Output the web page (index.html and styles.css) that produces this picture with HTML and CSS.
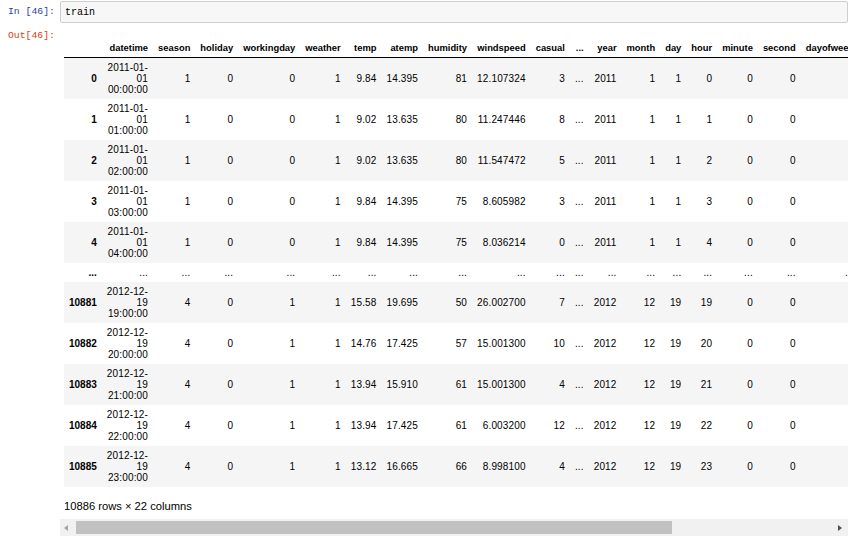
FILE: index.html
```html
<!DOCTYPE html>
<html>
<head>
<meta charset="utf-8">
<link rel="stylesheet" href="styles.css">
</head>
<body>
<div class="cell">
  <div class="prompt prompt-in">In&nbsp;[46]:</div>
  <div class="input-box"><span class="code">train</span></div>

  <div class="prompt prompt-out">Out[46]:</div>
  <div class="output">
    <div class="viewport">
      <table class="df">
        <thead>
          <tr><th></th><th>datetime</th><th>season</th><th>holiday</th><th>workingday</th><th>weather</th><th>temp</th><th>atemp</th><th>humidity</th><th>windspeed</th><th>casual</th><th>...</th><th>year</th><th>month</th><th>day</th><th>hour</th><th>minute</th><th>second</th><th>dayofweek</th></tr>
        </thead>
        <tbody>
          <tr><th>0</th><td>2011-01-<br>01<br>00:00:00</td><td>1</td><td>0</td><td>0</td><td>1</td><td>9.84</td><td>14.395</td><td>81</td><td>12.107324</td><td>3</td><td>...</td><td>2011</td><td>1</td><td>1</td><td>0</td><td>0</td><td>0</td><td>5</td></tr>
          <tr><th>1</th><td>2011-01-<br>01<br>01:00:00</td><td>1</td><td>0</td><td>0</td><td>1</td><td>9.02</td><td>13.635</td><td>80</td><td>11.247446</td><td>8</td><td>...</td><td>2011</td><td>1</td><td>1</td><td>1</td><td>0</td><td>0</td><td>5</td></tr>
          <tr><th>2</th><td>2011-01-<br>01<br>02:00:00</td><td>1</td><td>0</td><td>0</td><td>1</td><td>9.02</td><td>13.635</td><td>80</td><td>11.547472</td><td>5</td><td>...</td><td>2011</td><td>1</td><td>1</td><td>2</td><td>0</td><td>0</td><td>5</td></tr>
          <tr><th>3</th><td>2011-01-<br>01<br>03:00:00</td><td>1</td><td>0</td><td>0</td><td>1</td><td>9.84</td><td>14.395</td><td>75</td><td>8.605982</td><td>3</td><td>...</td><td>2011</td><td>1</td><td>1</td><td>3</td><td>0</td><td>0</td><td>5</td></tr>
          <tr><th>4</th><td>2011-01-<br>01<br>04:00:00</td><td>1</td><td>0</td><td>0</td><td>1</td><td>9.84</td><td>14.395</td><td>75</td><td>8.036214</td><td>0</td><td>...</td><td>2011</td><td>1</td><td>1</td><td>4</td><td>0</td><td>0</td><td>5</td></tr>
          <tr><th>...</th><td>...</td><td>...</td><td>...</td><td>...</td><td>...</td><td>...</td><td>...</td><td>...</td><td>...</td><td>...</td><td>...</td><td>...</td><td>...</td><td>...</td><td>...</td><td>...</td><td>...</td><td>...</td></tr>
          <tr><th>10881</th><td>2012-12-<br>19<br>19:00:00</td><td>4</td><td>0</td><td>1</td><td>1</td><td>15.58</td><td>19.695</td><td>50</td><td>26.002700</td><td>7</td><td>...</td><td>2012</td><td>12</td><td>19</td><td>19</td><td>0</td><td>0</td><td>2</td></tr>
          <tr><th>10882</th><td>2012-12-<br>19<br>20:00:00</td><td>4</td><td>0</td><td>1</td><td>1</td><td>14.76</td><td>17.425</td><td>57</td><td>15.001300</td><td>10</td><td>...</td><td>2012</td><td>12</td><td>19</td><td>20</td><td>0</td><td>0</td><td>2</td></tr>
          <tr><th>10883</th><td>2012-12-<br>19<br>21:00:00</td><td>4</td><td>0</td><td>1</td><td>1</td><td>13.94</td><td>15.910</td><td>61</td><td>15.001300</td><td>4</td><td>...</td><td>2012</td><td>12</td><td>19</td><td>21</td><td>0</td><td>0</td><td>2</td></tr>
          <tr><th>10884</th><td>2012-12-<br>19<br>22:00:00</td><td>4</td><td>0</td><td>1</td><td>1</td><td>13.94</td><td>17.425</td><td>61</td><td>6.003200</td><td>12</td><td>...</td><td>2012</td><td>12</td><td>19</td><td>22</td><td>0</td><td>0</td><td>2</td></tr>
          <tr><th>10885</th><td>2012-12-<br>19<br>23:00:00</td><td>4</td><td>0</td><td>1</td><td>1</td><td>13.12</td><td>16.665</td><td>66</td><td>8.998100</td><td>4</td><td>...</td><td>2012</td><td>12</td><td>19</td><td>23</td><td>0</td><td>0</td><td>2</td></tr>
        </tbody>
      </table>
      <p class="shape">10886 rows × 22 columns</p>
    </div>
    <div class="hscroll">
      <div class="sb-btn"><span class="arrow-left"></span></div>
      <div class="sb-track"><div class="sb-thumb"></div></div>
      <div class="sb-btn"><span class="arrow-right"></span></div>
    </div>
  </div>
</div>
</body>
</html>
```

FILE: styles.css
```css
html, body {
  margin: 0;
  padding: 0;
  background: #ffffff;
}

.cell {
  display: grid;
  grid-template-columns: 60px 788px;
  grid-template-rows: 22px auto;
  row-gap: 5px;
  padding-top: 1px;
  font-family: "Liberation Sans", Arial, sans-serif;
  color: #000;
}

.prompt {
  font-family: "Liberation Mono", "DejaVu Sans Mono", monospace;
  font-size: 9.8px;
  text-align: right;
  padding-right: 5px;
  white-space: nowrap;
}

.prompt-in {
  color: #303f9f;
  line-height: 22px;
}

.prompt-out {
  color: #d84315;
  line-height: 14px;
  padding-top: 1px;
}

.input-box {
  box-sizing: border-box;
  height: 22px;
  border: 1px solid #cfcfcf;
  border-radius: 2px;
  background: #f7f7f7;
  display: flex;
  align-items: center;
  padding-left: 4px;
}

.code {
  font-family: "Liberation Mono", "DejaVu Sans Mono", monospace;
  font-size: 10px;
  color: #000;
}

.output {
  display: flex;
  flex-direction: column;
  min-width: 0;
}

.viewport {
  overflow: hidden;
  padding: 10px 0 0 4px;
}

.df {
  border-collapse: collapse;
  border-spacing: 0;
  font-size: 10px;
  line-height: 11px;
  white-space: nowrap;
  color: #000;
}

.df th, .df td {
  text-align: right;
  vertical-align: middle;
  padding: 4px 5px;
  border: none;
}

.df td {
  letter-spacing: 0.15px;
}

.df th {
  font-weight: bold;
}

.df thead th {
  font-size: 9.4px;
  border-bottom: 1px solid #000;
}

.df tbody tr:nth-child(odd) {
  background: #f5f5f5;
}

.shape {
  margin: 13px 0 6px 0;
  font-size: 11.2px;
  line-height: 13px;
}

.hscroll {
  display: flex;
  height: 17px;
  background: #f1f1f1;
}

.sb-btn {
  width: 16px;
  flex: none;
  display: flex;
  align-items: center;
  justify-content: center;
}

.sb-track {
  flex: 1;
  display: flex;
  align-items: center;
}

.sb-thumb {
  width: 596px;
  height: 13px;
  background: #c1c1c1;
}

.arrow-left {
  width: 0;
  height: 0;
  border-top: 3.5px solid transparent;
  border-bottom: 3.5px solid transparent;
  border-right: 4px solid #a3a3a3;
  margin-right: 4px;
}

.arrow-right {
  width: 0;
  height: 0;
  border-top: 3.5px solid transparent;
  border-bottom: 3.5px solid transparent;
  border-left: 4px solid #505050;
}
```
